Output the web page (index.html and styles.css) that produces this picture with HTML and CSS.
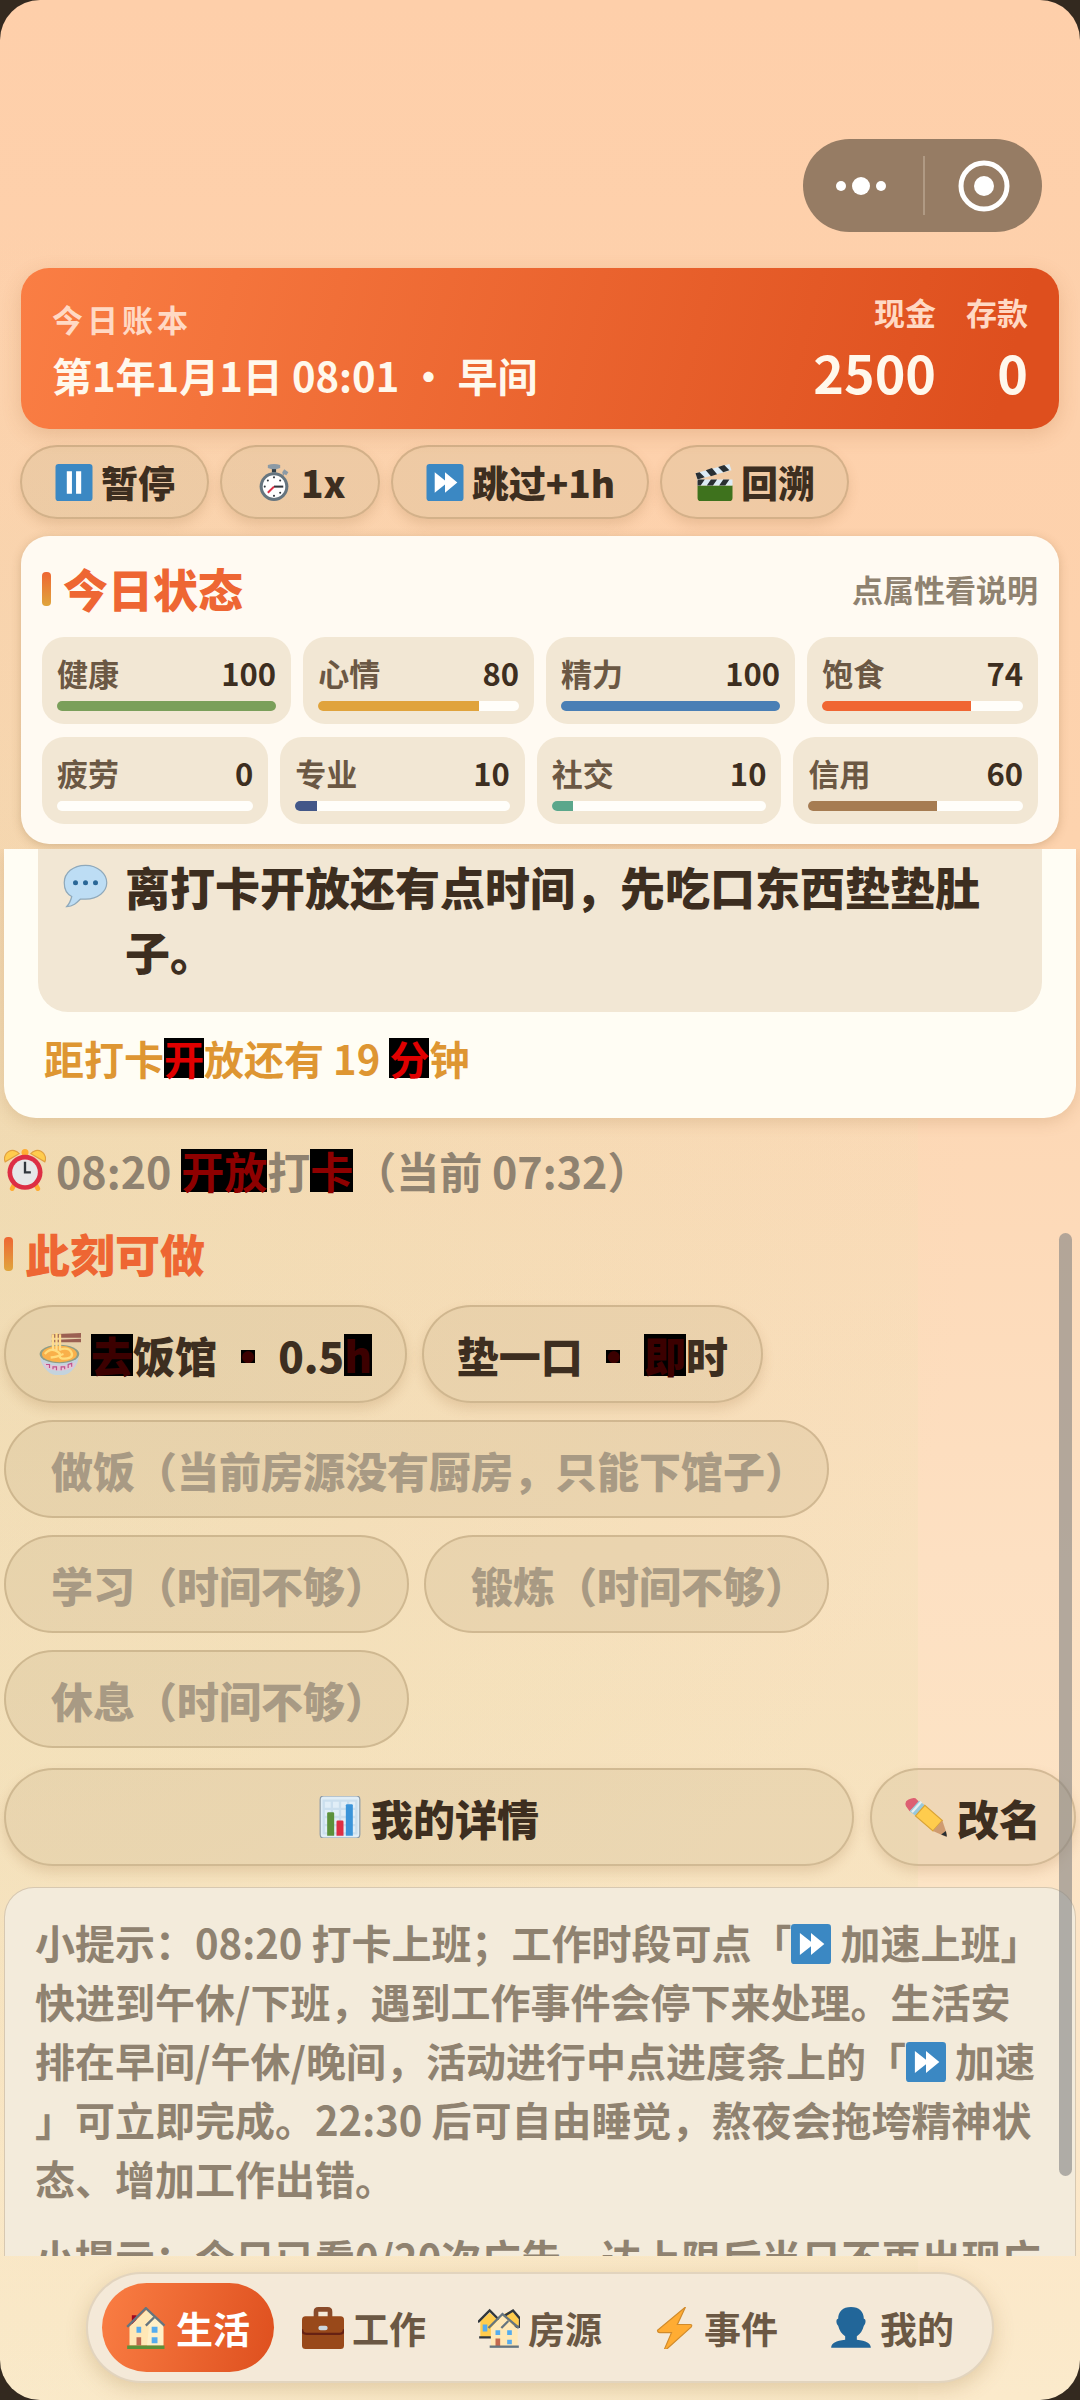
FILE: index.html
```
<!DOCTYPE html>
<html lang="zh-CN">
<head>
    <meta charset="UTF-8">
    <meta name="viewport" content="width=device-width, initial-scale=1.0">
    <title>今日账本</title>
    <link rel="stylesheet" href="styles.css">
</head>
<body>
    <!-- shared icons -->
    <svg class="sprite" aria-hidden="true">
        <symbol id="i-pause" viewBox="0 0 36 36">
            <rect width="36" height="36" rx="3" fill="#3b88c3"/>
            <path d="M11 7h5v22h-5zM20 7h5v22h-5z" fill="#fff"/>
        </symbol>
        <symbol id="i-fast" viewBox="0 0 36 36">
            <rect width="36" height="36" rx="3" fill="#3b88c3"/>
            <path d="M8 8l10 8V8l12 10-12 10v-8L8 28z" fill="#fff"/>
        </symbol>
        <symbol id="i-watch" viewBox="0 0 36 36">
            <path d="M12 1q6-2 12 0v3l-4 1v4h-4V5l-4-1z" fill="#8c9aa5"/>
            <path d="M16 5h4v3h-4z" fill="#31404a"/>
            <path d="M26 8l2-3 4 3-2 3-2-1-1 2z" fill="#8c9aa5"/>
            <circle cx="18" cy="22" r="14" fill="#66757f"/>
            <circle cx="18" cy="22" r="11" fill="#fff"/>
            <g fill="#31373d"><circle cx="18" cy="13" r="1"/><circle cx="18" cy="31" r="1"/><circle cx="9" cy="22" r="1"/><circle cx="12" cy="16" r="1"/><circle cx="24" cy="16" r="1"/><circle cx="24" cy="28" r="1"/></g>
            <path d="M18 22h9" stroke="#31373d" stroke-width="2"/>
            <path d="M18 22l-6 6" stroke="#dd2e44" stroke-width="2"/>
        </symbol>
        <symbol id="i-clap" viewBox="0 0 36 36">
            <path d="M2 21h34v12q0 3-3 3H5q-3 0-3-3z" fill="#3e721d"/>
            <path d="M2 15h34v6H2z" fill="#dcebf5"/>
            <path d="M0 9L33 0l2 6-33 9z" fill="#dcebf5"/>
            <path d="M3 15h6l-4 6H2v-5zM15 15h6l-4 6h-6zM27 15h6l-4 6h-6zM0 9l4-1 5 5-7 2zM10 6l6-2 5 6-6 2zM22 3l6-2 5 5-6 2z" fill="#292f33"/>
        </symbol>
        <symbol id="i-chat" viewBox="0 0 36 36">
            <path d="M18 1C8 1 1 7 1 15c0 5 2 9 6 11-1 4-2 6-4 8 5 0 8-3 11-6h4c10 0 17-6 17-13S28 1 18 1z" fill="#bdddf4" stroke="#8fa9bb" stroke-width="1"/>
            <g fill="#2a6797"><circle cx="10" cy="15" r="2"/><circle cx="18" cy="15" r="2"/><circle cx="26" cy="15" r="2"/></g>
        </symbol>
        <symbol id="i-alarm" viewBox="0 0 36 36">
            <path d="M9 30l-2 4M27 30l2 4" stroke="#ffac33" stroke-width="4" stroke-linecap="round"/>
            <path d="M1 11a7 7 0 0 1 12-7zM35 11a7 7 0 0 0-12-7z" fill="#ffcc4d" stroke="#e0a040"/>
            <circle cx="18" cy="3" r="3" fill="#ffac33"/>
            <circle cx="18" cy="20" r="15" fill="#dd2e44"/>
            <circle cx="18" cy="20" r="11" fill="#e6e7e8"/>
            <path d="M18 11v9h5" stroke="#31373d" stroke-width="2" fill="none"/>
        </symbol>
        <symbol id="i-noodle" viewBox="0 0 36 36">
            <path d="M11 1l25-1v4l-25 0zM11 6l25-1v3l-25 0z" fill="#9b6052"/>
            <path d="M1 18c0 8 3 12 8 16 4 3 13 3 17 0 5-4 8-8 8-16z" fill="#c3d3de"/>
            <path d="M3 25q14 6 29 0l-3 5q-12 5-23 0z" fill="#e3c6d6"/>
            <path d="M6 27h3v3M12 31v-2h3v3M19 32v-3h3v2M25 30v-3l3-1v3" stroke="#c0508c" stroke-width="1" fill="none"/>
            <ellipse cx="17.500" cy="18" rx="17" ry="8" fill="#8f9d86"/>
            <ellipse cx="17.500" cy="18" rx="15" ry="7" fill="#f9b04a"/>
            <path d="M5 18q5-6 11-2t-6 5M18 14q8-2 10 3t-8 5q-5-2 1-4" stroke="#ffdc7c" stroke-width="2" fill="none"/>
            <path d="M12 1v14M15 0v15M18 1v14" stroke="#ffdc8c" stroke-width="2"/>
        </symbol>
        <symbol id="i-chart" viewBox="0 0 36 36">
            <rect x="1" y="0" width="34" height="36" rx="3" fill="#e1eef7" stroke="#8c9aa5"/>
            <path d="M4 4h28v28H4zM4 11h28M4 18h28M4 25h28M11 4v28M18 4v28M25 4v28" stroke="#cbdfee" stroke-width="2" fill="none"/>
            <path d="M7 34V15q0-1 1-1h4q1 0 1 1v19z" fill="#5c913b"/>
            <path d="M15 34V22q0-1 1-1h4q1 0 1 1v12z" fill="#dd2e44"/>
            <path d="M23 34V8q0-1 1-1h4q1 0 1 1v26z" fill="#3b94d9"/>
        </symbol>
        <symbol id="i-pencil" viewBox="0 0 36 36">
            <path d="M1 9q-2-4 2-6t6-1l3 3-8 8z" fill="#dd5f72"/>
            <path d="M4 13l8-9 5 4-8 9z" fill="#99c9dc"/>
            <path d="M6 14l8-9" stroke="#e6eef2" stroke-width="2"/>
            <path d="M9 17l8-9 15 13-8 9z" fill="#ffcc4d" stroke="#d9a336" stroke-width="1"/>
            <path d="M24 30l8-9 4 12-1 2z" fill="#cf9b70"/>
            <path d="M31 33l4-3 1 5z" fill="#292f33"/>
        </symbol>
        <symbol id="i-house" viewBox="0 0 36 36">
            <path d="M5 7h4v8H5z" fill="#a0041e"/>
            <path d="M3 17L18 2l14 13v18H3z" fill="#ffe8b6"/>
            <path d="M20 14l5-4 7 7v16H18z" fill="#fff0c8"/>
            <path d="M1 17L17 1l16 15M17 16l7-7" stroke="#66757f" stroke-width="2" fill="none"/>
            <path d="M9 17h4v5H9zM22 17h5v5h-5zM22 26h5v5h-5z" fill="#55acee"/>
            <path d="M9 26h4v7H9z" fill="#c1694f"/>
            <path d="M1 33h32v3H1z" fill="#5c913b"/>
        </symbol>
        <symbol id="i-case" viewBox="0 0 36 36">
            <path d="M12 9V4q0-2 2-2h8q2 0 2 2v5" stroke="#8a4b2a" stroke-width="4" fill="none"/>
            <path d="M0 11q0-3 3-3h30q3 0 3 3v22q0 3-3 3H3q-3 0-3-3z" fill="#99491a"/>
            <path d="M0 19q0 4 4 4h28q4 0 4-4" stroke="#662113" stroke-width="2" fill="none"/>
            <rect x="14" y="16" width="8" height="4" rx="2" fill="#ccd6dd"/>
        </symbol>
        <symbol id="i-houses" viewBox="0 0 36 36">
            <path d="M2 12l8-7 8 7v14H2zM20 7l9-4 6 7v8H20z" fill="#ffcc4d"/>
            <path d="M0 13L10 3l9 9M22 8l8-5 6 7M1 26h11M36 9v8h-5" stroke="#31373d" stroke-width="2" fill="none"/>
            <path d="M4 15h4v6H4z" fill="#55acee"/>
            <path d="M11 18L21 7l13 12v15H11z" fill="#ffe8b6"/>
            <path d="M9 18L21 6l14 12M20 18l6-6" stroke="#66757f" stroke-width="2" fill="none"/>
            <path d="M15 20h4v4h-4zM25 20h4v4h-4zM25 28h4v4h-4z" fill="#55acee"/>
            <path d="M15 27h4v7h-4z" fill="#c1694f"/>
            <path d="M10 34h25" stroke="#66757f" stroke-width="2"/>
        </symbol>
        <symbol id="i-bolt" viewBox="0 0 36 36">
            <path d="M27 0L3 20q0 2 2 2h10L9 36q1 1 2 0l21-19q1-2-1-2H20z" fill="#ffac33" stroke="#d18b2b" stroke-width="1"/>
        </symbol>
        <symbol id="i-user" viewBox="0 0 36 36">
            <path d="M18 0c-7 0-11 4-11 10-2 0-2 4 0 6 1 4 3 7 6 9v3c-8 1-12 3-12 7h34c0-4-4-6-12-7v-3c3-2 5-5 6-9 2-2 2-6 0-6 0-6-4-10-11-10z" fill="#226699"/>
        </symbol>
    </svg>

    <div class="app">
        <div class="capsule">
            <button type="button" class="more" aria-label="更多">
                <svg width="52" height="52" viewBox="0 0 52 52" fill="#fff"><circle cx="6" cy="26" r="5"/><circle cx="26" cy="26" r="9"/><circle cx="46" cy="26" r="5"/></svg>
            </button>
            <button type="button" class="close" aria-label="关闭">
                <svg width="52" height="52" viewBox="0 0 52 52"><circle cx="26" cy="26" r="23" fill="none" stroke="#fff" stroke-width="5"/><circle cx="26" cy="26" r="10" fill="#fff"/></svg>
            </button>
        </div>

        <header class="ledger">
            <div class="ledger-date">
                <p class="ledger-label spaced">今日账本</p>
                <h1>第1年1月1日 08:01 <span class="dot">·</span> 早间</h1>
            </div>
            <div class="money">
                <p class="ledger-label">现金</p>
                <p class="amount">2500</p>
            </div>
            <div class="money">
                <p class="ledger-label">存款</p>
                <p class="amount">0</p>
            </div>
        </header>

        <div class="controls">
            <button type="button" class="pill small"><svg class="icon"><use href="#i-pause"/></svg>暂停</button>
            <button type="button" class="pill small"><svg class="icon"><use href="#i-watch"/></svg>1x</button>
            <button type="button" class="pill small"><svg class="icon"><use href="#i-fast"/></svg>跳过+1h</button>
            <button type="button" class="pill small"><svg class="icon"><use href="#i-clap"/></svg>回溯</button>
        </div>

        <section class="status">
            <div class="status-head">
                <h2 class="section-title">今日状态</h2>
                <span class="hint">点属性看说明</span>
            </div>
            <div class="stats">
                <div class="stat"><span>健康</span><b>100</b><div class="bar"><div class="fill green" style="width: 100%"></div></div></div>
                <div class="stat"><span>心情</span><b>80</b><div class="bar"><div class="fill yellow" style="width: 80%"></div></div></div>
                <div class="stat"><span>精力</span><b>100</b><div class="bar"><div class="fill blue" style="width: 100%"></div></div></div>
                <div class="stat"><span>饱食</span><b>74</b><div class="bar"><div class="fill orange" style="width: 74%"></div></div></div>
            </div>
            <div class="stats">
                <div class="stat"><span>疲劳</span><b>0</b><div class="bar"><div class="fill" style="width: 0%"></div></div></div>
                <div class="stat"><span>专业</span><b>10</b><div class="bar"><div class="fill navy" style="width: 10%"></div></div></div>
                <div class="stat"><span>社交</span><b>10</b><div class="bar"><div class="fill teal" style="width: 10%"></div></div></div>
                <div class="stat"><span>信用</span><b>60</b><div class="bar"><div class="fill brown" style="width: 60%"></div></div></div>
            </div>
        </section>

        <main class="scroller">
            <section class="story">
                <div class="bubble">
                    <svg class="icon"><use href="#i-chat"/></svg>
                    <p>离打卡开放还有点时间，先吃口东西垫垫肚子。</p>
                </div>
                <p class="countdown">距打卡<span class="mark">开</span>放还有 19 <span class="mark">分</span>钟</p>
            </section>

            <p class="clock"><svg class="icon"><use href="#i-alarm"/></svg><span>08:20 <span class="mark">开</span><span class="mark">放</span>打<span class="mark">卡</span>（当前 07:32）</span></p>

            <h2 class="section-title">此刻可做</h2>
            <div class="actions">
                <button type="button" class="pill"><svg class="icon"><use href="#i-noodle"/></svg><span><span class="mark">去</span>饭馆 <span class="dot mark-dot">·</span> 0.5<span class="mark">h</span></span></button>
                <button type="button" class="pill"><span>垫一口 <span class="dot mark-dot">·</span> <span class="mark">即</span>时</span></button>
                <button type="button" class="pill" disabled>做饭（当前房源没有厨房，只能下馆子）</button>
                <button type="button" class="pill" disabled>学习（时间不够）</button>
                <button type="button" class="pill" disabled>锻炼（时间不够）</button>
                <button type="button" class="pill" disabled>休息（时间不够）</button>
            </div>
            <div class="profile">
                <button type="button" class="pill grow"><svg class="icon"><use href="#i-chart"/></svg>我的详情</button>
                <button type="button" class="pill"><svg class="icon"><use href="#i-pencil"/></svg>改名</button>
            </div>

            <section class="tips">
                <p>小提示：08:20 打卡上班；工作时段可点「<svg class="icon"><use href="#i-fast"/></svg> 加速上班」快进到午休/下班，遇到工作事件会停下来处理。生活安排在早间/午休/晚间，活动进行中点进度条上的「<svg class="icon"><use href="#i-fast"/></svg> 加速」可立即完成。22:30 后可自由睡觉，熬夜会拖垮精神状态、增加工作出错。</p>
                <p>小提示：今日已看0/20次广告，达上限后当日不再出现广告。</p>
            </section>
            <div class="scrollbar"></div>
        </main>

        <nav class="tabs">
            <a href="#life" class="active"><svg class="icon"><use href="#i-house"/></svg>生活</a>
            <a href="#work"><svg class="icon"><use href="#i-case"/></svg>工作</a>
            <a href="#home"><svg class="icon"><use href="#i-houses"/></svg>房源</a>
            <a href="#event"><svg class="icon"><use href="#i-bolt"/></svg>事件</a>
            <a href="#me"><svg class="icon"><use href="#i-user"/></svg>我的</a>
        </nav>
    </div>
</body>
</html>
```
FILE: styles.css
```
* {
    box-sizing: border-box;
}
body {
    margin: 0;
    background: #33291f;
    color: #3d2e20;
    font-family: "Noto Sans CJK SC", sans-serif;
    font-weight: 700;
    text-spacing-trim: space-all;
}
h1, h2, p {
    margin: 0;
}
button {
    font: inherit;
    color: inherit;
    border: 0;
    background: none;
}
.sprite {
    display: none;
}
.icon {
    flex: none;
    width: 42px;
    height: 42px;
}
.app {
    display: flex;
    flex-direction: column;
    height: 100vh;
    padding-top: 139px;
    border-radius: 40px;
    overflow: hidden;
    background:
        linear-gradient(180deg, rgba(236, 226, 180, 0), rgba(236, 226, 180, 0.35) 60%, rgba(236, 226, 180, 0.1)) 0 100% / 85% 70% no-repeat,
        radial-gradient(circle at 0 50%, rgba(236, 218, 176, 0.7), rgba(236, 218, 176, 0) 60%),
        linear-gradient(180deg, #fecfaa, #fdd3ae 35%, #fde0c2 65%, #fbeacb);
}

/* top capsule */
.capsule {
    display: flex;
    align-self: flex-end;
    margin: 0 38px 36px;
    padding: 17px 0;
    border-radius: 47px;
    background: #967c64;
}
.capsule button {
    display: flex;
    align-items: center;
    justify-content: center;
    width: 119px;
    height: 59px;
    padding: 0;
}
.capsule .more {
    width: 120px;
    padding-right: 4px;
}
.capsule .close {
    border-left: 2px solid #b09a84;
}

/* ledger header */
.ledger {
    display: flex;
    align-items: flex-end;
    gap: 30px;
    margin: 0 21px 16px;
    padding: 21px 31px 24px;
    border-radius: 28px;
    color: #fff8ec;
    background: linear-gradient(105deg, #fa7e44, #de4f1e 94%);
    box-shadow: 0 6px 20px rgba(160, 90, 40, 0.2);
}
.ledger-date {
    flex: 1;
}
.ledger-label {
    font-size: 31px;
    line-height: 46px;
    color: #ffd9c4;
}
.spaced {
    letter-spacing: 4px;
}
.ledger h1 {
    margin-top: 3px;
    font-size: 40px;
    font-weight: 700;
    line-height: 60px;
}
.money {
    text-align: right;
}
.amount {
    margin-top: 4px;
    font-size: 52px;
    line-height: 66px;
}
.dot {
    display: inline-block;
    width: 1em;
    text-align: center;
}

/* pill buttons */
.pill {
    display: flex;
    align-items: center;
    justify-content: center;
    gap: 10px;
    height: 98px;
    padding: 0 33px;
    border: 2px solid rgba(130, 100, 55, 0.25);
    border-radius: 49px;
    font-size: 42px;
    font-weight: 900;
    background: rgba(205, 184, 144, 0.28);
    box-shadow: 0 6px 12px rgba(150, 100, 50, 0.18);
    white-space: nowrap;
}
.pill:disabled {
    padding: 0 20px 0 45px;
    color: #a89a84;
    box-shadow: none;
}
.small {
    gap: 7px;
    height: 74px;
    padding: 0 32px;
    font-size: 37px;
}
.small .icon {
    width: 40px;
    height: 37px;
}
.grow {
    flex: 1;
}
.controls {
    display: flex;
    gap: 11px;
    margin: 0 20px 17px;
}

/* status card */
.status {
    margin: 0 21px 5px;
    padding: 20px 21px;
    border-radius: 28px;
    background: #fffaf2;
    box-shadow: 0 2px 10px rgba(120, 80, 30, 0.25);
}
.status-head {
    display: flex;
    align-items: center;
    justify-content: space-between;
    height: 65px;
}
.section-title {
    display: flex;
    align-items: center;
    gap: 12px;
    font-size: 45px;
    font-weight: 900;
    line-height: 65px;
    color: #ee6633;
}
.section-title::before {
    content: "";
    width: 9px;
    height: 34px;
    border-radius: 4px;
    background: linear-gradient(#ee6633, #e0a53c);
}
.hint {
    font-size: 31px;
    color: #8f8270;
}
.stats {
    display: flex;
    gap: 12px;
    margin-top: 13px;
}
.status-head + .stats {
    margin-top: 16px;
}
.stat {
    display: flex;
    flex: 1 1 auto;
    flex-wrap: wrap;
    justify-content: space-between;
    padding: 13px 15px;
    border-radius: 22px;
    font-size: 31px;
    line-height: 46px;
    background: #f2e7d4;
}
.stat span {
    color: #6b5844;
}
.stat b {
    font-weight: 700;
}
.bar {
    width: 100%;
    height: 10px;
    margin-top: 5px;
    border-radius: 5px;
    overflow: hidden;
    background: #fffefa;
}
.fill {
    height: 100%;
}
.green { background: #7a9f5a; }
.yellow { background: #e0a33c; }
.blue { background: #4a7fb5; }
.orange { background: #f06632; }
.navy { background: #435788; }
.teal { background: #5ba78b; }
.brown { background: #a67c52; }

/* scrolling content */
.scroller {
    position: relative;
    flex: 1;
    min-height: 0;
    padding: 0 4px;
    overflow: hidden;
}
.story {
    padding: 0 34px 31px;
    border-radius: 0 0 32px 32px;
    background: #fffdf4;
    box-shadow: 0 4px 16px rgba(150, 100, 50, 0.2);
}
.bubble {
    display: flex;
    gap: 17px;
    padding: 5px 25px 28px;
    border-radius: 0 0 30px 30px;
    font-size: 45px;
    font-weight: 900;
    line-height: 65px;
    background: #f2e7d4;
}
.bubble .icon {
    width: 45px;
    height: 45px;
    margin-top: 10px;
}
.countdown {
    margin-top: 17px;
    padding: 0 6px;
    font-size: 40px;
    line-height: 58px;
    color: #de9632;
}
.mark {
    display: inline-block;
    line-height: 1;
    color: #e00000;
    background: #000;
}
.mark-dot {
    background: linear-gradient(#000, #000) center 56% / 14px 13px no-repeat;
}
.clock {
    display: flex;
    align-items: center;
    gap: 10px;
    margin: 22px 0 21px;
    font-size: 43px;
    line-height: 60px;
    color: #8f8270;
}
.clock .mark {
    color: #8e0000;
}
.pill .mark, .pill .mark-dot {
    color: #3c0000;
}
.actions {
    display: flex;
    flex-wrap: wrap;
    gap: 17px 15px;
    margin: 19px 200px 20px 0;
}
.profile {
    display: flex;
    gap: 16px;
    margin-bottom: 21px;
}
.tips {
    padding: 25px 29px 26px 30px;
    border: 1px solid rgba(130, 95, 50, 0.25);
    border-radius: 30px;
    font-size: 40px;
    line-height: 59px;
    color: #8f8270;
    background: #f3ebdb;
    line-break: anywhere;
}
.tips p + p {
    margin-top: 20px;
}
.tips .icon {
    width: 40px;
    height: 40px;
    vertical-align: -5px;
}
.scrollbar {
    position: absolute;
    top: 27.3%;
    right: 8px;
    width: 13px;
    height: 67%;
    border-radius: 7px;
    background: rgba(130, 130, 130, 0.6);
}

/* bottom tabs */
.tabs {
    display: flex;
    align-self: center;
    gap: 4px;
    margin: 16px 0 17px;
    padding: 9px 14px;
    border: 2px solid rgba(130, 95, 50, 0.15);
    border-radius: 56px;
    background: #f4e9d8;
    box-shadow: 0 6px 20px rgba(150, 110, 50, 0.25);
}
.tabs a {
    display: flex;
    align-items: center;
    gap: 8px;
    height: 89px;
    padding: 0 24px;
    border-radius: 45px;
    font-size: 37px;
    color: #6b5844;
    text-decoration: none;
}
.tabs .active {
    color: #fff;
    background: linear-gradient(105deg, #fa7e44, #de4f1e);
}
```
